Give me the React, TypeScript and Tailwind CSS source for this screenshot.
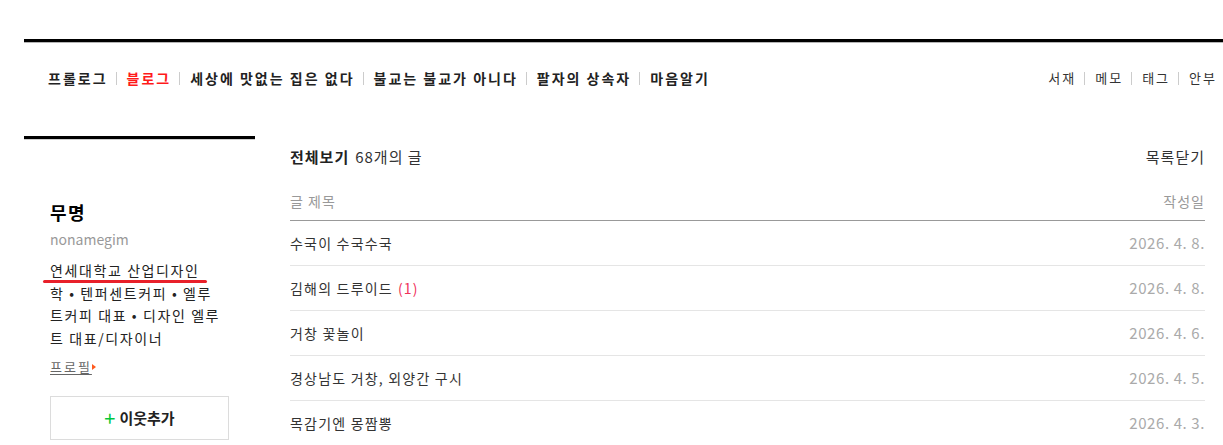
import React from "react";

const navLeft = ["프롤로그", "블로그", "세상에 맛없는 집은 없다", "불교는 불교가 아니다", "팔자의 상속자", "마음알기"];
const navRight = ["서재", "메모", "태그", "안부"];

const posts: { title: string; count?: number; date: string }[] = [
  { title: "수국이 수국수국", date: "2026. 4. 8." },
  { title: "김해의 드루이드", count: 1, date: "2026. 4. 8." },
  { title: "거창 꽃놀이", date: "2026. 4. 6." },
  { title: "경상남도 거창, 외양간 구시", date: "2026. 4. 5." },
  { title: "목감기엔 몽짬뽕", date: "2026. 4. 3." },
];

export default function App() {
  return (
    <div className="w-[1223px] h-[445px] overflow-hidden bg-white pl-6 pt-[39px] font-['Noto_Sans_CJK_KR','Noto_Sans',sans-serif] text-[#333]">
      <div className="h-[3px] bg-black" />
      <div className="h-px bg-[#b5b5b5]" />
      <nav className="flex h-[70px] items-center justify-between pl-6 pr-[6px]">
        <ul className="flex items-center text-[14px] font-bold leading-[20px] tracking-[2px]">
          {navLeft.map((n, i) => (
            <li key={n} className="flex items-center">
              {i > 0 && <span className="ml-[8px] mr-[10px] h-[13px] w-px bg-[#ccc]" />}
              <span className={i === 1 ? "text-[#ff1a1a]" : "text-[#222]"}>{n}</span>
            </li>
          ))}
        </ul>
        <ul className="flex items-center text-[13px] leading-[20px] tracking-[2px]">
          {navRight.map((n, i) => (
            <li key={n} className="flex items-center">
              {i > 0 && <span className="ml-[8px] mr-[10px] h-[13px] w-px bg-[#ccc]" />}
              <span className="text-[#333]">{n}</span>
            </li>
          ))}
        </ul>
      </nav>
      <div className="flex gap-[35px] pr-[18px] pt-[23px]">
        <aside className="relative w-[231px] shrink-0">
          <div className="h-[3px] bg-black" />
          <div className="h-px bg-[#cfcfcf]" />
          <div className="pl-[26px] pt-[60px]">
            <h2 className="text-[18px] font-bold leading-[24px] tracking-[1.5px] text-black">무명</h2>
            <p className="mt-[5px] text-[14px] leading-[20px] text-[#999]">nonamegim</p>
            <div className="mt-[10px] text-[14px] leading-[22.5px] tracking-[1.6px] text-[#222]">
              <div>연세대학교 산업디자인</div>
              <div>학 • 텐퍼센트커피 • 엘루</div>
              <div>트커피 대표 • 디자인 엘루</div>
              <div>트 대표/디자이너</div>
            </div>
            <div className="mt-[8px] flex items-center text-[13px] leading-[20px] tracking-[2px] text-[#666]">
              <span className="underline underline-offset-2">프로필</span>
              <span className="h-0 w-0 border-y-[3px] border-l-[4px] border-y-transparent border-l-[#ff5a1f]" />
            </div>
            <button className="mt-[19px] flex h-[44px] w-[179px] items-center justify-center border border-[#dcdcdc] bg-white">
              <span className="mr-[4px] text-[20px] font-normal leading-[20px] text-[#00c73c]">+</span>
              <span className="text-[15px] font-bold text-[#222]">이웃추가</span>
            </button>
          </div>
          <div className="absolute left-[19px] top-[144px] h-[3px] w-[164px] rounded-full bg-[#e8202a]" />
        </aside>
        <main className="flex-1 pt-[10px]">
          <div className="flex items-center justify-between text-[15px] leading-[22px] tracking-[1px]">
            <div>
              <span className="font-bold text-[#222]">전체보기</span>
              <span className="ml-[6px] text-[#333]">68개의 글</span>
            </div>
            <span className="text-[#333]">목록닫기</span>
          </div>
          <div className="flex justify-between border-b border-[#999] pb-[9px] pt-[23px] text-[14px] leading-[20px] tracking-[1px] text-[#999]">
            <span>글 제목</span>
            <span>작성일</span>
          </div>
          <ul>
            {posts.map((p) => (
              <li key={p.title} className="flex h-[45px] items-center justify-between border-b border-[#e5e5e5] text-[14px]">
                <span className="tracking-[1.2px] text-[#333]">
                  {p.title}
                  {p.count !== undefined && <span className="ml-[5px] text-[#f0325a]">({p.count})</span>}
                </span>
                <span className="text-[15px] tracking-[0.6px] text-[#aaa]">{p.date}</span>
              </li>
            ))}
          </ul>
        </main>
      </div>
    </div>
  );
}
